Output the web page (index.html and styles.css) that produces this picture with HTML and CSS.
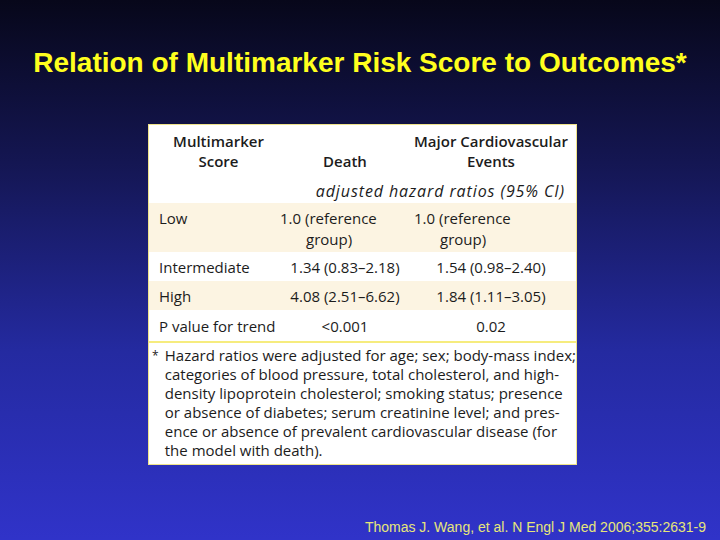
FILE: index.html
```html
<!DOCTYPE html>
<html>
<head>
<meta charset="utf-8">
<link rel="stylesheet" href="styles.css">
</head>
<body>
<div class="slide">
  <h1 class="title">Relation of Multimarker Risk Score to Outcomes*</h1>
  <div class="card">
    <div class="row head">
      <div class="c1 hc"><span>Multimarker<br>Score</span></div>
      <div class="c2 hc death"><span>Death</span></div>
      <div class="c3 hc"><span>Major Cardiovascular<br>Events</span></div>
    </div>
    <div class="row adj"><div class="span">adjusted hazard ratios (95% CI)</div></div>
    <div class="row low shade">
      <div class="c1">Low</div>
      <div class="c2 ref"><span>1.0 (reference<br><span class="ind">group)</span></span></div>
      <div class="c3 ref"><span>1.0 (reference<br><span class="ind">group)</span></span></div>
    </div>
    <div class="row r29">
      <div class="c1">Intermediate</div>
      <div class="c2">1.34 (0.83–2.18)</div>
      <div class="c3">1.54 (0.98–2.40)</div>
    </div>
    <div class="row r29 shade">
      <div class="c1">High</div>
      <div class="c2">4.08 (2.51–6.62)</div>
      <div class="c3">1.84 (1.11–3.05)</div>
    </div>
    <div class="row r31">
      <div class="c1">P value for trend</div>
      <div class="c2">&lt;0.001</div>
      <div class="c3">0.02</div>
    </div>
    <div class="note"><span class="star">*</span><div class="notetext">Hazard ratios were adjusted for age; sex; body-mass index;<br>categories of blood pressure, total cholesterol, and high-<br>density lipoprotein cholesterol; smoking status; presence<br>or absence of diabetes; serum creatinine level; and pres-<br>ence or absence of prevalent cardiovascular disease (for<br>the model with death).</div></div>
  </div>
  <div class="cite">Thomas J. Wang, et al. N Engl J Med 2006;355:2631-9</div>
</div>
</body>
</html>
```
FILE: styles.css
```css
html, body { margin: 0; padding: 0; }
body { width: 720px; height: 540px; overflow: hidden; }
.slide {
  width: 720px; height: 540px; box-sizing: border-box;
  background: linear-gradient(to bottom, #07071a 0%, #141652 30%, #242aa0 65%, #3033c9 100%);
  display: flex; flex-direction: column;
  font-family: "Open Sans", sans-serif;
}
.title {
  margin: 0; padding: 46px 0 0 0; height: 78px; box-sizing: border-box;
  font-family: "Liberation Sans", Arial, sans-serif; font-weight: bold;
  font-size: 28px; line-height: 34px; color: #ffff1e; text-align: center;
  white-space: nowrap;
}
.card {
  margin: 46px 0 0 148px; width: 429px; height: 341px; box-sizing: border-box;
  background: #fff; border: 1px solid #efe38a;
  color: #1c1c1c; font-size: 15px;
  display: flex; flex-direction: column;
  white-space: nowrap;
}
.row { display: flex; align-items: center; flex-shrink: 0; }
.c1 { width: 121px; padding-left: 10px; box-sizing: border-box; }
.c2 { width: 150px; display: flex; justify-content: center; }
.c3 { width: 142px; display: flex; justify-content: center; }
.head { height: 53px; align-items: flex-start; font-weight: 600; line-height: 20px; padding-top: 6px; box-sizing: border-box; }
.hc { display: flex; justify-content: center; text-align: center; }
.c1.hc { padding-left: 18px; }
.death { padding-top: 20px; }
.adj { height: 25px; font-style: italic; font-size: 16px; letter-spacing: 0.9px; }
.span { flex: 1; text-align: right; padding-right: 11px; }
.shade { background: #fcf4e2; }
.low { height: 49px; line-height: 21px; align-items: flex-start; padding-top: 5px; box-sizing: border-box; }
.ref { justify-content: flex-start; }
.c2.ref { padding-left: 10px; box-sizing: border-box; }
.c3.ref { margin-left: -6px; width: 148px; }
.ind { padding-left: 26px; }
.r29 { height: 29px; }
.r31 { height: 31px; }
.note {
  border-top: 2px solid #f6ec7e; flex: 1;
  display: flex; padding: 3px 0 0 3px; line-height: 19px;
}
.star { width: 13px; font-size: 12px; }
.notetext { flex: 1; letter-spacing: 0; }
.cite {
  margin-top: auto; padding: 0 14px 5px 0; text-align: right;
  font-family: "Liberation Sans", Arial, sans-serif; font-size: 14px;
  color: #e6e67a;
}
```
